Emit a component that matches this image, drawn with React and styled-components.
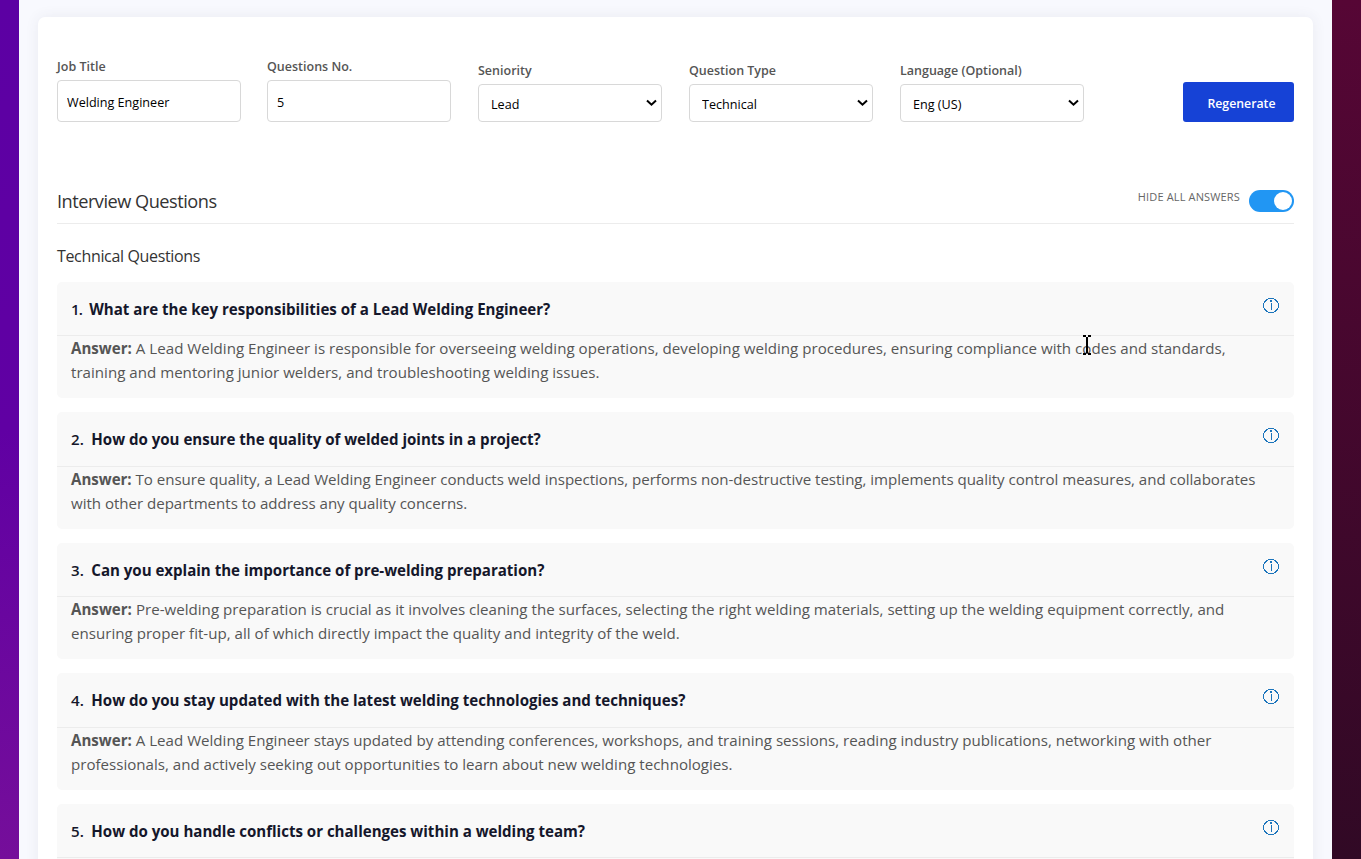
import React, { useState } from 'react';
import styled, { createGlobalStyle } from 'styled-components';

const GlobalStyle = createGlobalStyle`
  * {
    box-sizing: border-box;
  }

  body {
    margin: 0;
    font-family: 'Segoe UI', 'Open Sans', 'Noto Sans', sans-serif;
    font-size: 15.1px;
    line-height: 24px;
    color: #212529;
  }
`;

const Page = styled.div`
  height: 859px;
  overflow: hidden;
  padding: 0 29px 0 19px;
  background:
    linear-gradient(#560635, #310925) right / 29px 100% no-repeat,
    linear-gradient(#5c00a3 0%, #6000a3 50%, #750e9a 100%);
`;

const Panel = styled.div`
  height: 859px;
  overflow: hidden;
  padding: 17px 19px 0;
  background: #f8f9fe;
`;

const Card = styled.div`
  height: 1000px;
  padding: 38px 19px 0;
  border-radius: 7px;
  background: #fff;
  box-shadow: 0 0 14px rgba(60, 70, 90, 0.08);
`;

const FormRow = styled.form`
  display: flex;
  align-items: flex-end;
  gap: 27px;
  height: 67px;
`;

const FieldGroup = styled.div`
  width: 184px;
  display: flex;
  flex-direction: column;

  &:first-child {
    margin-right: -1px;
  }
`;

const Label = styled.label`
  height: 20px;
  margin-bottom: 4px;
  font-size: 12.5px;
  font-weight: 600;
  line-height: 22px;
  white-space: nowrap;
  color: #555;
`;

const Input = styled.input`
  width: 100%;
  height: 42px;
  padding: 2px 9px 0;
  border: 1px solid #d8d8d8;
  border-radius: 4px;
  font-family: inherit;
  font-size: 12.6px;
  color: #000;
  background: #fff;
`;

const SelectWrap = styled.div`
  position: relative;

  svg {
    position: absolute;
    top: 15px;
    right: 5px;
    pointer-events: none;
  }
`;

const Select = styled.select`
  display: block;
  appearance: none;
  width: 100%;
  height: 38px;
  padding: 2px 12px 0;
  border: 1px solid #d8d8d8;
  border-radius: 4px;
  font-family: inherit;
  font-size: 12.6px;
  color: #000;
  background: #fff;
`;

const SubmitButton = styled.button`
  width: 111px;
  height: 40px;
  margin-left: auto;
  padding: 2px 18px 0 24px;
  border: 0;
  border-radius: 3px;
  font-family: inherit;
  font-size: 12.3px;
  font-weight: 600;
  white-space: nowrap;
  color: #fff;
  background: #1642d6;
`;

const TitleBar = styled.div`
  display: flex;
  align-items: flex-start;
  justify-content: space-between;
  height: 52px;
  margin-top: 50px;
  border-bottom: 1px solid #ececec;
`;

const Title = styled.h2`
  margin: 15px 0 0;
  font-size: 18.2px;
  font-weight: 400;
  line-height: 28px;
  letter-spacing: -0.5px;
  color: #333;
`;

const ToggleGroup = styled.div`
  display: flex;
  margin-top: 18px;
  gap: 9px;
`;

const ToggleText = styled.span`
  font-size: 11px;
  font-weight: 500;
  line-height: 14px;
  letter-spacing: 0.15px;
  color: #666;
`;

const Toggle = styled.button`
  display: flex;
  align-items: center;
  justify-content: ${props => (props.$on ? 'flex-end' : 'flex-start')};
  width: 45px;
  height: 22px;
  padding: 0 2px;
  border: 0;
  border-radius: 11px;
  background: ${props => (props.$on ? '#2196f3' : '#ccc')};
`;

const Knob = styled.span`
  width: 18px;
  height: 18px;
  border-radius: 50%;
  background: #fff;
`;

const SectionTitle = styled.h3`
  margin: 20px 0 13.8px;
  font-size: 16px;
  font-weight: 400;
  line-height: 24px;
  letter-spacing: -0.34px;
  color: #333;
`;

const QuestionList = styled.div`
  display: flex;
  flex-direction: column;
  gap: 14.2px;
`;

const QuestionCard = styled.div`
  height: 116.3px;
  flex-shrink: 0;
  border-radius: 5px;
  background: #f9f9f9;
`;

const QuestionHeader = styled.div`
  display: flex;
  justify-content: space-between;
  height: 54.3px;
  padding: 15px 15px 0 14px;
  border-bottom: 1px solid #ececec;
`;

const QuestionText = styled.div`
  display: flex;
  gap: 7.5px;
  font-weight: 600;
  white-space: nowrap;
  color: #15172b;

  strong {
    font-weight: 700;
    letter-spacing: -0.02px;
  }

  ${QuestionCard}:first-child & span {
    letter-spacing: -1px;
  }
`;

const InfoIcon = styled.svg`
  width: 16px;
  height: 15px;
  margin-top: 1px;
`;

const Answer = styled.div`
  padding: 0.3px 14px 0;
  letter-spacing: ${props => props.$tracking || 0}px;
  color: #555;
`;

const AnswerLine = styled.div`
  white-space: nowrap;
`;

const TextCursor = styled.svg`
  position: absolute;
  top: 335px;
  left: 1083px;
`;

const questions = [
  {
    title: 'What are the key responsibilities of a Lead Welding Engineer?',
    tracking: 0.012,
    lines: [
      'A Lead Welding Engineer is responsible for overseeing welding operations, developing welding procedures, ensuring compliance with codes and standards,',
      'training and mentoring junior welders, and troubleshooting welding issues.',
    ],
  },
  {
    title: 'How do you ensure the quality of welded joints in a project?',
    tracking: -0.032,
    lines: [
      'To ensure quality, a Lead Welding Engineer conducts weld inspections, performs non-destructive testing, implements quality control measures, and collaborates',
      'with other departments to address any quality concerns.',
    ],
  },
  {
    title: 'Can you explain the importance of pre-welding preparation?',
    tracking: 0.014,
    lines: [
      'Pre-welding preparation is crucial as it involves cleaning the surfaces, selecting the right welding materials, setting up the welding equipment correctly, and',
      'ensuring proper fit-up, all of which directly impact the quality and integrity of the weld.',
    ],
  },
  {
    title: 'How do you stay updated with the latest welding technologies and techniques?',
    lines: [
      'A Lead Welding Engineer stays updated by attending conferences, workshops, and training sessions, reading industry publications, networking with other',
      'professionals, and actively seeking out opportunities to learn about new welding technologies.',
    ],
  },
  {
    title: 'How do you handle conflicts or challenges within a welding team?',
    lines: [],
  },
];

const SelectField = ({ label, value }) => (
  <FieldGroup>
    <Label>{label}</Label>
    <SelectWrap>
      <Select defaultValue={value}>
        <option>{value}</option>
      </Select>
      <svg width="11" height="8" viewBox="0 0 11 8">
        <path d="M1 1.5L5.5 5.7L10 1.5" fill="none" stroke="#000" strokeWidth="2" />
      </svg>
    </SelectWrap>
  </FieldGroup>
);

const Info = () => (
  <InfoIcon viewBox="0 0 16 15" shapeRendering="crispEdges">
    <ellipse cx="8" cy="7.5" rx="7.5" ry="7" fill="none" stroke="#1c75bc" />
    <path d="M8.5 5V12" stroke="#1c75bc" />
    <path d="M7 2h2v2H7z" fill="#1c75bc" />
  </InfoIcon>
);

const App = () => {
  const [showAnswers, setShowAnswers] = useState(true);

  return (
    <Page>
      <GlobalStyle />
      <Panel>
        <Card>
          <FormRow onSubmit={e => e.preventDefault()}>
            <FieldGroup>
              <Label>Job Title</Label>
              <Input type="text" defaultValue="Welding Engineer" />
            </FieldGroup>
            <FieldGroup>
              <Label>Questions No.</Label>
              <Input type="text" defaultValue="5" />
            </FieldGroup>
            <SelectField label="Seniority" value="Lead" />
            <SelectField label="Question Type" value="Technical" />
            <SelectField label="Language (Optional)" value="Eng (US)" />
            <SubmitButton type="submit">Regenerate</SubmitButton>
          </FormRow>

          <TitleBar>
            <Title>Interview Questions</Title>
            <ToggleGroup>
              <ToggleText>{showAnswers ? 'HIDE ALL ANSWERS' : 'SHOW ALL ANSWERS'}</ToggleText>
              <Toggle type="button" $on={showAnswers} onClick={() => setShowAnswers(!showAnswers)}>
                <Knob />
              </Toggle>
            </ToggleGroup>
          </TitleBar>

          <SectionTitle>Technical Questions</SectionTitle>
          <QuestionList>
            {questions.map((question, i) => (
              <QuestionCard key={question.title}>
                <QuestionHeader>
                  <QuestionText>
                    <span>{i + 1}.</span>
                    <strong>{question.title}</strong>
                  </QuestionText>
                  <Info />
                </QuestionHeader>
                {showAnswers && (
                  <Answer $tracking={question.tracking}>
                    {question.lines.map((line, n) => (
                      <AnswerLine key={line}>
                        {n === 0 && <b>Answer: </b>}
                        {line}
                      </AnswerLine>
                    ))}
                  </Answer>
                )}
              </QuestionCard>
            ))}
          </QuestionList>
        </Card>
      </Panel>
      <TextCursor width="8" height="20" viewBox="0 0 8 20" shapeRendering="crispEdges">
        <path d="M0 1H3M5 1H8M0 19H3M5 19H8" stroke="#000" strokeWidth="2" />
        <path d="M4 2V18" stroke="#000" strokeWidth="2" />
      </TextCursor>
    </Page>
  );
};

export default App;
